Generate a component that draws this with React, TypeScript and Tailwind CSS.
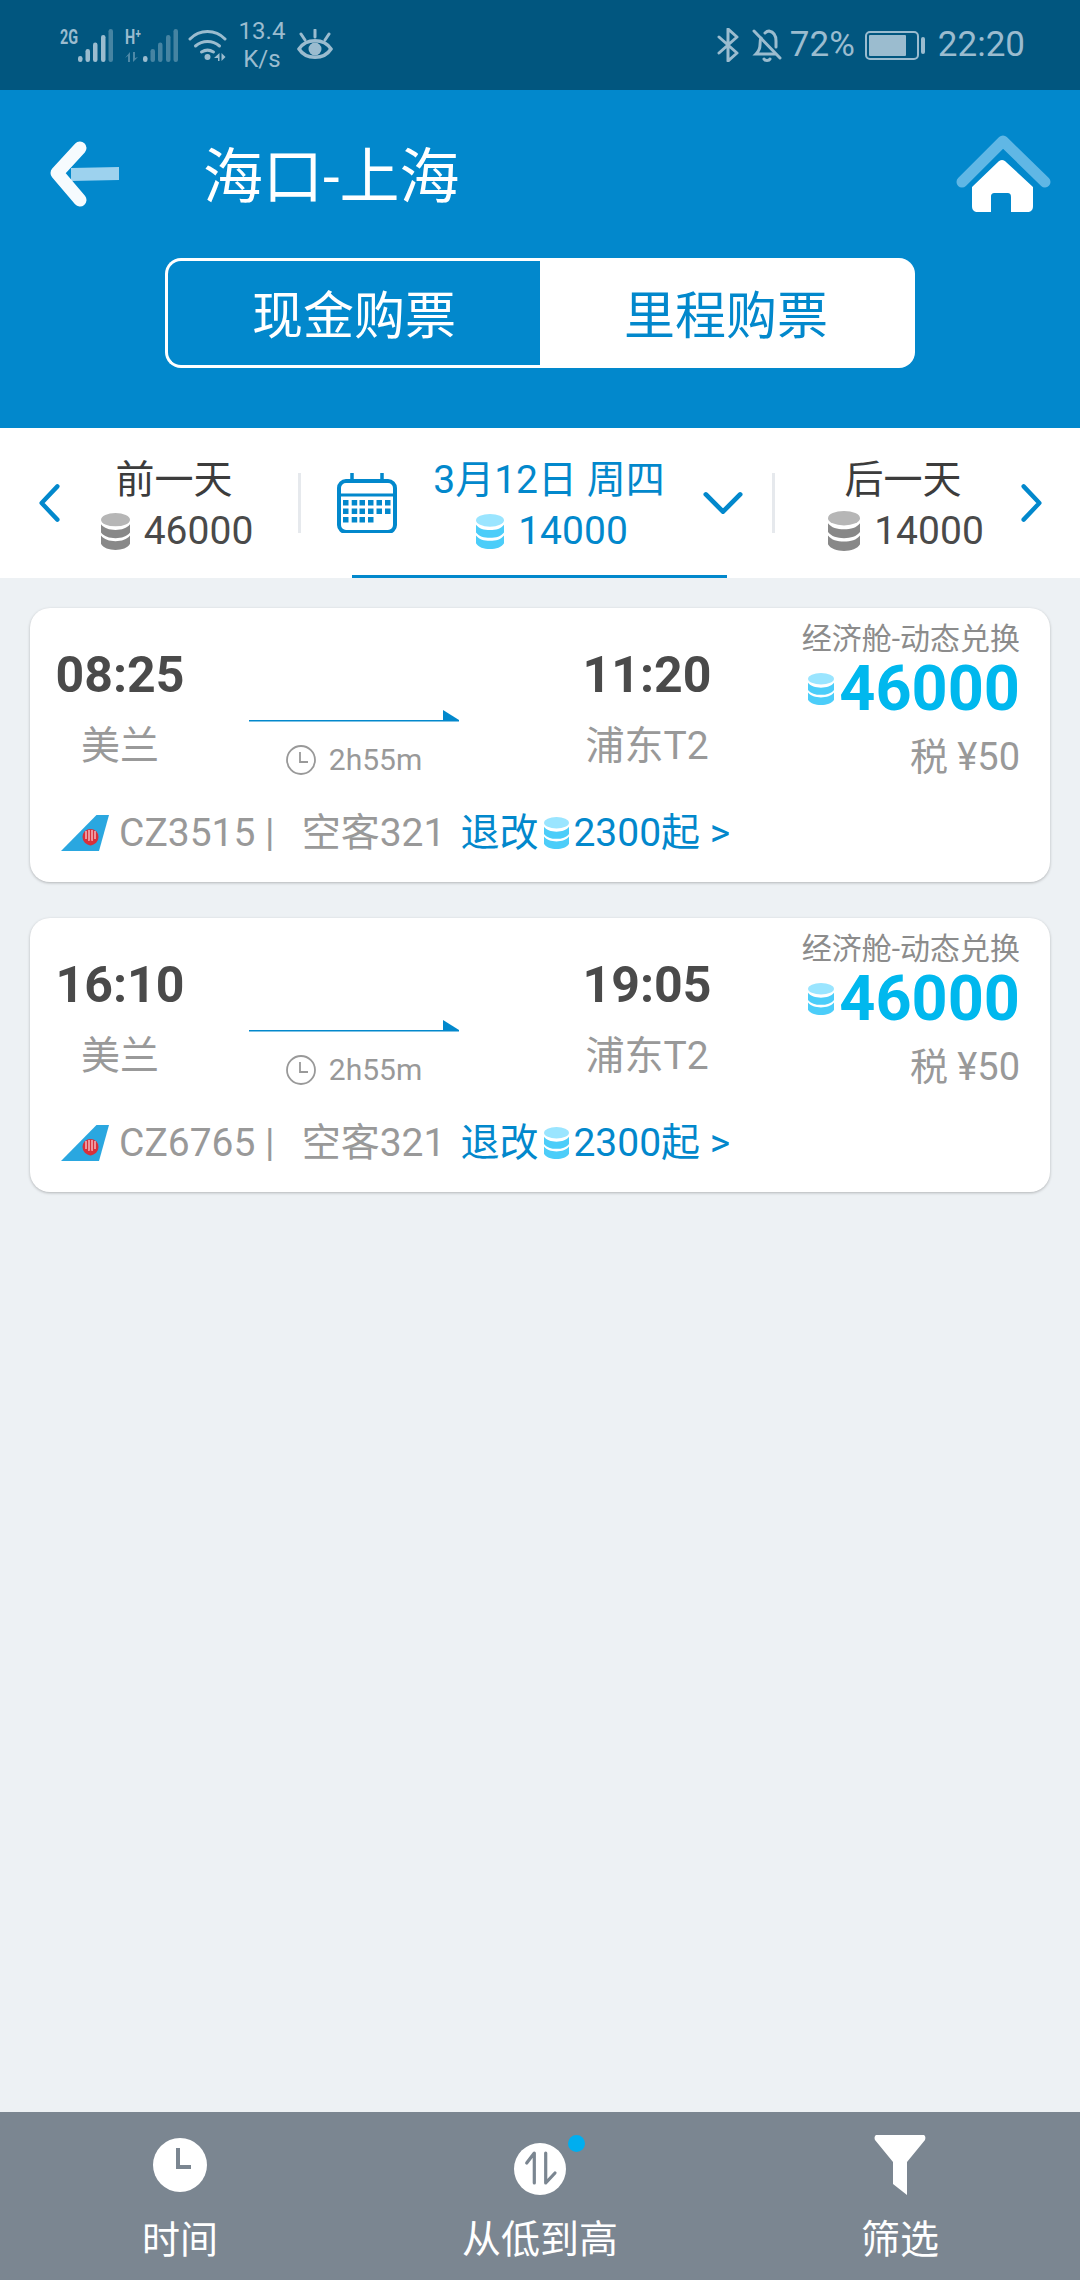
const flights = [
  { dep: "08:25", arr: "11:20", no: "CZ3515" },
  { dep: "16:10", arr: "19:05", no: "CZ6765" },
];

function Coin({ blue, className }: { blue?: boolean; className: string }) {
  const top = blue ? "#9ae5ff" : "#b6b6b6";
  const body = blue ? "#4ccdf9" : "#888888";
  return (
    <svg viewBox="0 0 28 36" preserveAspectRatio="none" className={className}>
      <ellipse cx="14" cy="6.500" rx="14" ry="6.500" fill={top} />
      <path d="M0 11C3 15 8 16.500 14 16.500S25 15 28 11V19C25 23 20 24.500 14 24.500S3 23 0 19Z" fill={body} />
      <path d="M0 22C3 26 8 27.500 14 27.500S25 26 28 22V30C26 34 20 36 14 36S2 34 0 30Z" fill={body} />
    </svg>
  );
}

function SignalBars({ level }: { level: number }) {
  const bars = [
    [0, 27],
    [7.500, 20],
    [15, 13.500],
    [23, 6],
    [30.500, 0],
  ];
  return (
    <svg width="35" height="33" viewBox="0 0 35 33" className="block">
      {bars.map(([x, y], i) => (
        <rect key={x} x={x} y={y} width="4.500" height={33 - y} rx="2.200" fill="#9bbccf" opacity={i < level ? 1 : 0.45} />
      ))}
    </svg>
  );
}

function StatusBar() {
  return (
    <div className="h-[90px] bg-[#01567f] flex items-center justify-between pl-[60px] pr-[55px] text-[#9bbccf]">
      <div className="flex items-center">
        <div className="flex items-start h-[33px]">
          <span className="w-[18px] text-[20px] leading-[17px] font-bold scale-x-[0.72] origin-left whitespace-nowrap">2G</span>
          <SignalBars level={4} />
        </div>
        <div className="relative flex items-start h-[33px] ml-[12px]">
          <span className="w-[18px] text-[20px] leading-[17px] font-bold scale-x-[0.72] origin-left whitespace-nowrap">H⁺</span>
          <SignalBars level={1} />
          <svg width="15" height="10" viewBox="0 0 15 10" className="absolute left-0 bottom-0">
            <path d="M5 0v10H3V4L0 6zM8 0h2v6l3-1-5 5z" fill="#9bbccf" opacity="0.5" />
          </svg>
        </div>
        <svg width="39" height="32" viewBox="0 0 38 32" className="ml-[10px]" fill="none" stroke="#9bbccf" strokeWidth="3" strokeLinecap="round">
          <path d="M1.500 10C11 0 27 0 36.500 10" />
          <path d="M7 17c7-6 17-6 24 0" />
          <path d="M13 23c4-2.500 8-2.500 12 0" />
          <circle cx="19" cy="28" r="3" fill="#9bbccf" stroke="none" />
          <path d="M31 24v8h-1.500v-3h-4zM33 24v8l4-4z" fill="#9bbccf" stroke="none" />
        </svg>
        <div className="w-[44px] ml-[13px] flex flex-col items-center text-[24px] leading-[28px] -mt-[1px]">
          <span>13.4</span>
          <span>K/s</span>
        </div>
        <svg width="36" height="32" viewBox="0 0 36 32" className="ml-[13px]" fill="none" stroke="#9bbccf" strokeWidth="3.500">
          <path d="M2 20C9 9 27 9 34 20 27 31 9 31 2 20z" />
          <circle cx="18" cy="20" r="6.500" fill="#9bbccf" stroke="none" />
          <path d="M18 1v7M4 5l4 6M32 5l-4 6" strokeLinecap="round" strokeWidth="3" />
        </svg>
      </div>
      <div className="flex items-center">
        <svg width="22" height="34" viewBox="0 0 22 34" fill="none" stroke="#9bbccf" strokeWidth="3" strokeLinecap="round" strokeLinejoin="round">
          <path d="M2 9l18 16-9 8V1l9 8L2 25" />
        </svg>
        <svg width="30" height="34" viewBox="0 0 30 34" className="ml-[13px]" fill="none" stroke="#9bbccf" strokeWidth="3" strokeLinecap="round">
          <path d="M2 3l26 27" />
          <path d="M9 10c-1 2-1 4-1 7 0 4-1 6-4 9h19M13 5c1-1 2-2 4-2 5 1 7 5 7 10v6" />
          <path d="M12 31c1 2 5 2 6 0" />
        </svg>
        <span className="text-[35px] leading-[40px] ml-[8px]">72%</span>
        <div className="ml-[10px] w-[54px] h-[29px] rounded-[5px] border-[2px] border-[#9bbccf] p-[2px]">
          <div className="w-[37px] h-full bg-[#9bbccf] rounded-[1px]" />
        </div>
        <div className="ml-[2px] w-[4px] h-[17px] bg-[#9bbccf] rounded-[2px]" />
        <span className="text-[35px] leading-[40px] ml-[13px]">22:20</span>
      </div>
    </div>
  );
}

function Header() {
  return (
    <div className="h-[338px] bg-[#0288cc] flex flex-col">
      <div className="flex items-start pt-[50px] pl-[50px] pr-[24px] h-[168px]">
        <svg width="72" height="70" viewBox="0 0 72 70" className="shrink-0">
          <path d="M21 28l48-1v13l-48 1z" fill="#9dd2ee" />
          <path d="M30 8L7 33l23 27" fill="none" stroke="#f6fbfe" strokeWidth="13" strokeLinecap="round" strokeLinejoin="round" />
        </svg>
        <span className="ml-[81px] mt-[2px] text-[60px] leading-[72px] text-white">海口-上海</span>
        <svg width="106" height="90" viewBox="0 0 106 90" className="ml-auto -mt-[10px] shrink-0">
          <path d="M12 52l41-41 42 41" fill="none" stroke="#60b7e5" strokeWidth="11" strokeLinecap="round" strokeLinejoin="round" />
          <path d="M52 30c2 0 3 1 4 2L83 57V76c0 4-2 6-6 6H61V67c0-3-1-4-4-4H45c-3 0-4 1-4 4V82H28c-4 0-6-2-6-6V57L48 32c1-1 2-2 4-2z" fill="#fff" />
        </svg>
      </div>
      <div className="ml-[165px] w-[750px] h-[110px] flex text-[51px]">
        <div className="w-[375px] h-full rounded-l-[16px] border-[3px] border-r-0 border-white text-white flex items-center justify-center pt-[8px]">现金购票</div>
        <div className="flex-1 h-full rounded-r-[16px] bg-white text-[#0288cc] flex items-center justify-center pt-[8px] pr-[3px]">里程购票</div>
      </div>
    </div>
  );
}

function Calendar() {
  const rows = [
    [346, 354.700, 362.500, 371, 379.500, 388],
    [346, 354.700, 362.500, 371, 379.500, 388],
    [346, 354.700, 362.500, 371],
  ];
  return (
    <svg width="60" height="60" viewBox="337 473 60 60" className="shrink-0 ml-[36px]" fill="none" stroke="#0288cc">
      <rect x="339" y="481" width="56" height="51" rx="7" strokeWidth="4" />
      <path d="M339 495h56" strokeWidth="3" />
      <path d="M352 473v10M382 473v10" strokeWidth="3.500" />
      {rows.map((row, i) =>
        row.map((x) => <rect key={`${i}-${x}`} x={x - 3} y={500 + i * 8.500} width="5.500" height="5.500" fill="#0288cc" stroke="none" />),
      )}
    </svg>
  );
}

function Separator() {
  return <div className="w-[3px] h-[60px] bg-[#e6e9ed] shrink-0" />;
}

function Chevron({ d, className }: { d: string; className: string }) {
  return (
    <svg viewBox="0 0 24 44" className={className} fill="none" stroke="#0288cc" strokeWidth="5" strokeLinecap="round" strokeLinejoin="round">
      <path d={d} />
    </svg>
  );
}

function DateStrip() {
  return (
    <div className="h-[150px] bg-white flex items-center">
      <div className="w-[298px] flex items-center pl-[39px] shrink-0">
        <Chevron d="M21 3L3 22l18 19" className="w-[21px] h-[42px]" />
        <div className="w-[228px] flex flex-col items-center mt-[6px]">
          <span className="text-[39px] leading-[50px] text-[#3c3c3c]">前一天</span>
          <div className="flex items-center ml-[6px] text-[39px] leading-[52px] text-[#4a4a4a]">
            <Coin className="w-[29px] h-[37px] mr-[14px]" />
            46000
          </div>
        </div>
      </div>
      <Separator />
      <div className="relative w-[471px] h-full flex items-center shrink-0">
        <Calendar />
        <div className="w-[226px] ml-[39px] flex flex-col items-center text-[#0288cc] mt-[6px]">
          <span className="text-[39px] leading-[50px] whitespace-nowrap">3月12日 周四</span>
          <div className="flex items-center ml-[6px] text-[39px] leading-[52px]">
            <Coin blue className="w-[28px] h-[35px] mr-[14px]" />
            14000
          </div>
        </div>
        <svg width="40" height="24" viewBox="0 0 42 24" className="ml-[41px] shrink-0" fill="none" stroke="#0288cc" strokeWidth="5" strokeLinecap="round" strokeLinejoin="round">
          <path d="M3 3l18 18L39 3" />
        </svg>
        <div className="absolute left-[51px] bottom-0 w-[375px] h-[3px] bg-[#0288cc]" />
      </div>
      <Separator />
      <div className="flex-1 flex items-center pl-[10px]">
        <div className="w-[236px] flex flex-col items-center mt-[6px]">
          <span className="text-[39px] leading-[50px] text-[#3c3c3c]">后一天</span>
          <div className="flex items-center ml-[6px] text-[39px] leading-[52px] text-[#4a4a4a]">
            <Coin className="w-[32px] h-[40px] mr-[14px]" />
            14000
          </div>
        </div>
        <Chevron d="M3 3l18 19L3 41" className="w-[21px] h-[42px]" />
      </div>
    </div>
  );
}

function TailLogo() {
  return (
    <svg width="50" height="38" viewBox="60 812 50 38" className="shrink-0">
      <path d="M61 849l35.500-36H109l-10 36z" fill="#2aa7e0" />
      <circle cx="90.500" cy="835" r="8" fill="#d8303a" />
      <path d="M86 829v8M89 828v11M92 828v11M95 829v8" stroke="#fff" strokeWidth="1" />
      <circle cx="90.500" cy="841" r="2.500" fill="#d8303a" />
    </svg>
  );
}

function FlightCard({ dep, arr, no }: { dep: string; arr: string; no: string }) {
  return (
    <div className="h-[274px] bg-white rounded-[20px] shadow-[0_1px_3px_rgba(0,0,0,0.25)] pb-[27px] flex flex-col justify-between">
      <div className="flex items-start pl-[27px] pr-[30px]">
        <div className="w-[126px] mt-[45px] flex flex-col items-center">
          <span className="text-[50px] leading-[44px] font-bold text-[#4a4a4a]">{dep}</span>
          <span className="text-[39px] leading-[44px] mt-[27px] text-[#999999]">美兰</span>
        </div>
        <div className="w-[210px] ml-[66px] mt-[102px] flex flex-col items-center">
          <svg width="210" height="12" viewBox="0 0 210 12" className="block">
            <path d="M0 10h210v1.500H0z" fill="#0288cc" />
            <path d="M194 0l16 10h-16z" fill="#0288cc" />
          </svg>
          <div className="flex items-center mt-[20px] text-[30px] leading-[36px] text-[#999999]">
            <svg width="30" height="30" viewBox="0 0 30 30" fill="none" stroke="#999999" strokeWidth="1.800" className="mr-[13px]">
              <circle cx="15" cy="15" r="14" />
              <path d="M14 7v10h8" />
            </svg>
            2h55m
          </div>
        </div>
        <div className="w-[126px] ml-[125px] mt-[45px] flex flex-col items-center">
          <span className="text-[50px] leading-[44px] font-bold text-[#4a4a4a]">{arr}</span>
          <span className="text-[39px] leading-[44px] mt-[27px] text-[#999999] whitespace-nowrap">浦东T2</span>
        </div>
        <div className="ml-auto pt-[15px] flex flex-col items-end">
          <span className="text-[30px] leading-[32px] text-[#8c8c8c] whitespace-nowrap">经济舱-动态兑换</span>
          <div className="flex items-center mt-[4px] text-[63px] leading-[60px] font-bold text-[#00b8ee]">
            <Coin blue className="w-[26px] h-[32px] mr-[5px]" />
            46000
          </div>
          <span className="text-[38px] leading-[44px] mt-[16px] text-[#999999]">税 ¥50</span>
        </div>
      </div>
      <div className="flex items-center pl-[30px] text-[39px] leading-[44px] whitespace-pre">
        <TailLogo />
        <span className="ml-[9px] text-[#999999]">{no} |</span>
        <span className="ml-[27px] text-[#999999]">空客321</span>
        <span className="ml-[15px] text-[#0288cc]">退改</span>
        <Coin blue className="w-[25px] h-[32px] ml-[6px] mr-[4px]" />
        <span className="text-[#0288cc]">2300起 &gt;</span>
      </div>
    </div>
  );
}

function BottomBar() {
  return (
    <div className="h-[168px] bg-[#7b8691] grid grid-cols-3 text-white">
      <div className="flex flex-col items-center pt-[23px]">
        <svg width="60" height="60" viewBox="0 0 60 60" className="block">
          <circle cx="30" cy="30" r="27" fill="#fff" />
          <path d="M26 13h4v17h11v4H26z" fill="#7b8691" />
        </svg>
        <span className="mt-[23px] text-[38px] leading-[44px]">时间</span>
      </div>
      <div className="flex flex-col items-center pt-[23px]">
        <div className="relative w-[60px] h-[60px]">
          <svg width="60" height="60" viewBox="0 0 60 60" className="block">
            <circle cx="30" cy="34" r="26" fill="#fff" />
            <path d="M24.300 48V18L16.700 28M35.700 18V48L45 38" fill="none" stroke="#7b8691" strokeWidth="3.200" strokeLinecap="round" strokeLinejoin="round" />
          </svg>
          <div className="absolute right-[-15px] top-0 w-[17px] h-[17px] rounded-full bg-[#00aeef]" />
        </div>
        <span className="mt-[23px] text-[39px] leading-[44px]">从低到高</span>
      </div>
      <div className="flex flex-col items-center pt-[23px]">
        <svg width="60" height="60" viewBox="0 0 60 60" className="block">
          <path d="M7 0h46c2 0 3 2 2 5L37 27v33l-14-11V27L5 5C4 2 5 0 7 0z" fill="#fff" />
        </svg>
        <span className="mt-[23px] text-[39px] leading-[44px]">筛选</span>
      </div>
    </div>
  );
}

export default function App() {
  return (
    <div className="w-[1080px] h-[2280px] flex flex-col bg-[#edf1f4] font-['Roboto','Noto_Sans_CJK_SC',sans-serif]">
      <StatusBar />
      <Header />
      <DateStrip />
      <div className="flex-1 px-[30px] pt-[30px] flex flex-col gap-[36px]">
        {flights.map((f) => (
          <FlightCard key={f.no} {...f} />
        ))}
      </div>
      <BottomBar />
    </div>
  );
}
